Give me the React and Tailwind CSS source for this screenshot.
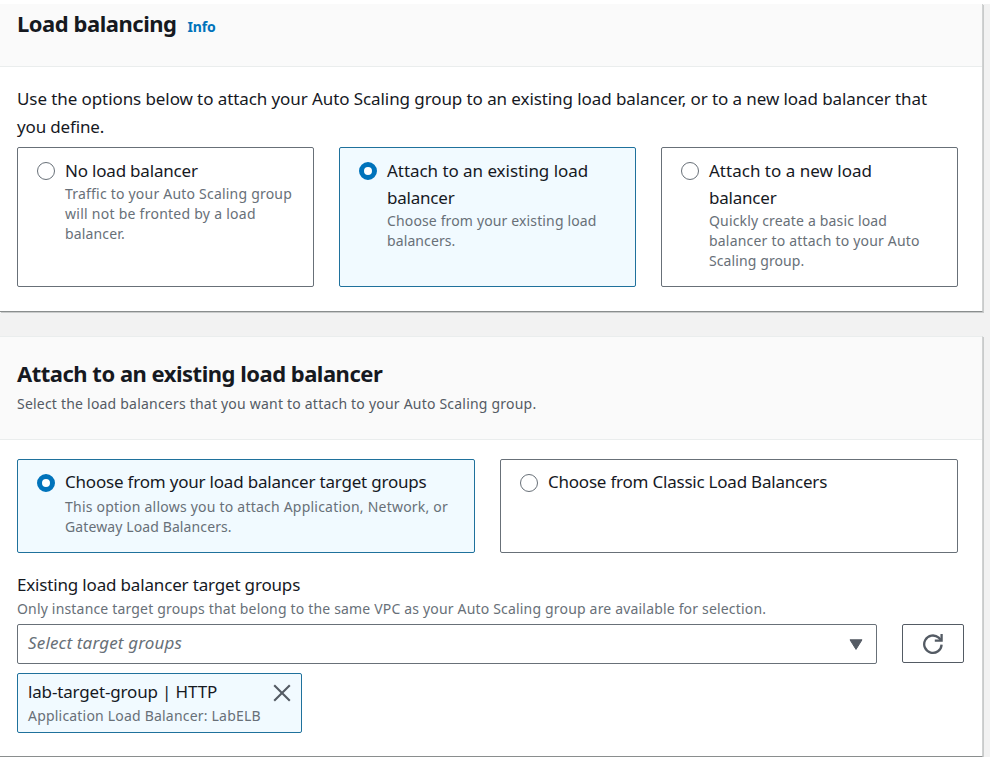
function Radio({ checked }) {
  return (
    <span
      className={`mt-[5px] h-[18px] w-[18px] shrink-0 rounded-full bg-white ${
        checked ? "border-[5.5px] border-[#0073bb]" : "border-[1.5px] border-[#687078]"
      }`}
    />
  );
}

function Tile({ checked, title, lines, className, textClass = "", gapClass = "" }) {
  return (
    <div
      className={`flex rounded-[2px] border pl-[19px] pt-[9px] ${
        checked ? "border-[#1f719c] bg-[#f1faff]" : "border-[#687078] bg-white"
      } ${className}`}
    >
      <Radio checked={checked} />
      <div className={`ml-[10px] ${textClass}`}>
        {title.map(([text, tracking]) => (
          <div key={text} className={`text-[17px] leading-[27px] text-[#16191f] ${tracking}`}>
            {text}
          </div>
        ))}
        <div className={gapClass}>
          {lines.map(([text, tracking]) => (
            <div key={text} className={`text-[14px] leading-[19.75px] text-[#687078] ${tracking}`}>
              {text}
            </div>
          ))}
        </div>
      </div>
    </div>
  );
}

export default function App() {
  return (
    <div className="h-[757px] w-[996px] overflow-hidden whitespace-nowrap bg-white pt-1 font-['Noto_Sans','Open_Sans',sans-serif]">
      <div className="h-[753px] w-[990px] bg-[#f2f2f2]">
        <section className="h-[308px] w-[983px] border-b border-r border-b-[#8a8e8e] border-r-[#d0d2d2] bg-white shadow-[1px_1px_0_0_#c9cbcb]">
          <header className="flex h-[63px] items-start border-b border-[#eaeded] bg-[#fafafa] pl-[17px] pt-[5px]">
            <h2 className="text-[22px] font-bold leading-[28px] tracking-[-0.47px] text-[#16191f]">Load balancing</h2>
            <a className="ml-[11px] mt-[4px] text-[14px] font-bold leading-[28px] tracking-[-0.17px] text-[#0073bb]">Info</a>
          </header>
          <p className="ml-[17px] mt-[18px] text-[17px] leading-[28px] text-[#16191f]">
            <span className="block tracking-[-0.086px]">
              Use the options below to attach your Auto Scaling group to an existing load balancer, or to a new load balancer that
            </span>
            <span className="block tracking-[-0.16px]">you define.</span>
          </p>
          <div className="ml-[17px] mt-[6px] flex gap-[25px]">
            <Tile
              className="h-[140px] w-[297px]"
              title={[["No load balancer", "tracking-[-0.2px]"]]}
              lines={[
                ["Traffic to your Auto Scaling group", "tracking-[0.21px]"],
                ["will not be fronted by a load", "tracking-[0.26px]"],
                ["balancer.", "tracking-[0.15px]"],
              ]}
            />
            <Tile
              checked
              className="h-[140px] w-[297px]"
              title={[
                ["Attach to an existing load", "tracking-[-0.05px]"],
                ["balancer", "tracking-[-0.22px]"],
              ]}
              lines={[
                ["Choose from your existing load", "tracking-[0.14px]"],
                ["balancers.", "tracking-[0.1px]"],
              ]}
            />
            <Tile
              className="h-[140px] w-[297px]"
              title={[
                ["Attach to a new load", "tracking-[0.01px]"],
                ["balancer", "tracking-[-0.22px]"],
              ]}
              lines={[
                ["Quickly create a basic load", "tracking-[0.17px]"],
                ["balancer to attach to your Auto", "tracking-[0.2px]"],
                ["Scaling group.", "tracking-[0.1px]"],
              ]}
            />
          </div>
        </section>

        <section className="mt-[24px] h-[421px] w-[983px] border-b border-r border-t border-b-[#8a8e8e] border-r-[#d0d2d2] border-t-[#eaeded] bg-white shadow-[1px_1px_0_0_#c9cbcb]">
          <header className="h-[103px] border-b border-[#eaeded] bg-[#fafafa] pl-[17px] pt-[22px]">
            <h2 className="text-[22px] font-bold leading-[28px] tracking-[-0.5px] text-[#16191f]">
              Attach to an existing load balancer
            </h2>
            <p className="mt-[7px] text-[14px] leading-[20px] tracking-[0.21px] text-[#545b64]">
              Select the load balancers that you want to attach to your Auto Scaling group.
            </p>
          </header>
          <div className="ml-[17px] mt-[19px] flex gap-[25px]">
            <Tile
              checked
              className="h-[94px] w-[458px]"
              textClass="-mt-px"
              gapClass="mt-[2px]"
              title={[["Choose from your load balancer target groups", "tracking-[-0.2px]"]]}
              lines={[
                ["This option allows you to attach Application, Network, or", "tracking-[0.22px]"],
                ["Gateway Load Balancers.", "tracking-[0.11px]"],
              ]}
            />
            <Tile
              className="h-[94px] w-[458px]"
              textClass="-mt-px"
              title={[["Choose from Classic Load Balancers", "tracking-[-0.22px]"]]}
              lines={[]}
            />
          </div>
          <div className="ml-[17px] mt-[18px]">
            <div className="text-[17px] leading-[27px] tracking-[-0.17px] text-[#16191f]">
              Existing load balancer target groups
            </div>
            <div className="mt-px text-[14px] leading-[20px] tracking-[0.177px] text-[#687078]">
              Only instance target groups that belong to the same VPC as your Auto Scaling group are available for selection.
            </div>
            <div className="mt-[5px] flex items-start gap-[25px]">
              <div className="flex h-[40px] w-[860px] items-center justify-between rounded-[2px] border border-[#687078] pl-[10px] pr-[13px]">
                <span className="pb-[2px] text-[17px] italic leading-[36px] tracking-[0.157px] text-[#687078]">Select target groups</span>
                <svg className="h-[11px] w-[14px]" viewBox="0 0 14 11">
                  <path d="M1 .8h12L7 10.4z" fill="#545b64" stroke="#545b64" strokeLinejoin="round" />
                </svg>
              </div>
              <button className="flex h-[39px] w-[62px] items-center justify-center rounded-[2px] border border-[#545b64] bg-white">
                <svg className="h-[22px] w-[22px]" viewBox="0 0 22 22" fill="none" stroke="#545b64" strokeWidth="2.3">
                  <path d="M19.6 11.6a8.7 8.7 0 1 1-2.9-6.9l2 2" />
                  <path d="M19.6 1v6.6h-6.8" />
                </svg>
              </button>
            </div>
            <div className="mt-[9px] flex h-[60px] w-[285px] justify-between rounded-[2px] border border-[#1f719c] bg-[#f1faff] pl-[10px] pr-[10px] pt-[4px]">
              <div>
                <div className="text-[17px] leading-[27px] tracking-[-0.16px] text-[#16191f]">lab-target-group | HTTP</div>
                <div className="mt-px text-[14px] leading-[20px] tracking-[0.2px] text-[#687078]">
                  Application Load Balancer: LabELB
                </div>
              </div>
              <svg className="mt-[6px] h-[18px] w-[18px]" viewBox="0 0 18 18" stroke="#545b64" strokeWidth="2.1">
                <path d="M1.2 1.2l15.6 15.6M16.8 1.2L1.2 16.8" />
              </svg>
            </div>
          </div>
        </section>
      </div>
    </div>
  );
}
